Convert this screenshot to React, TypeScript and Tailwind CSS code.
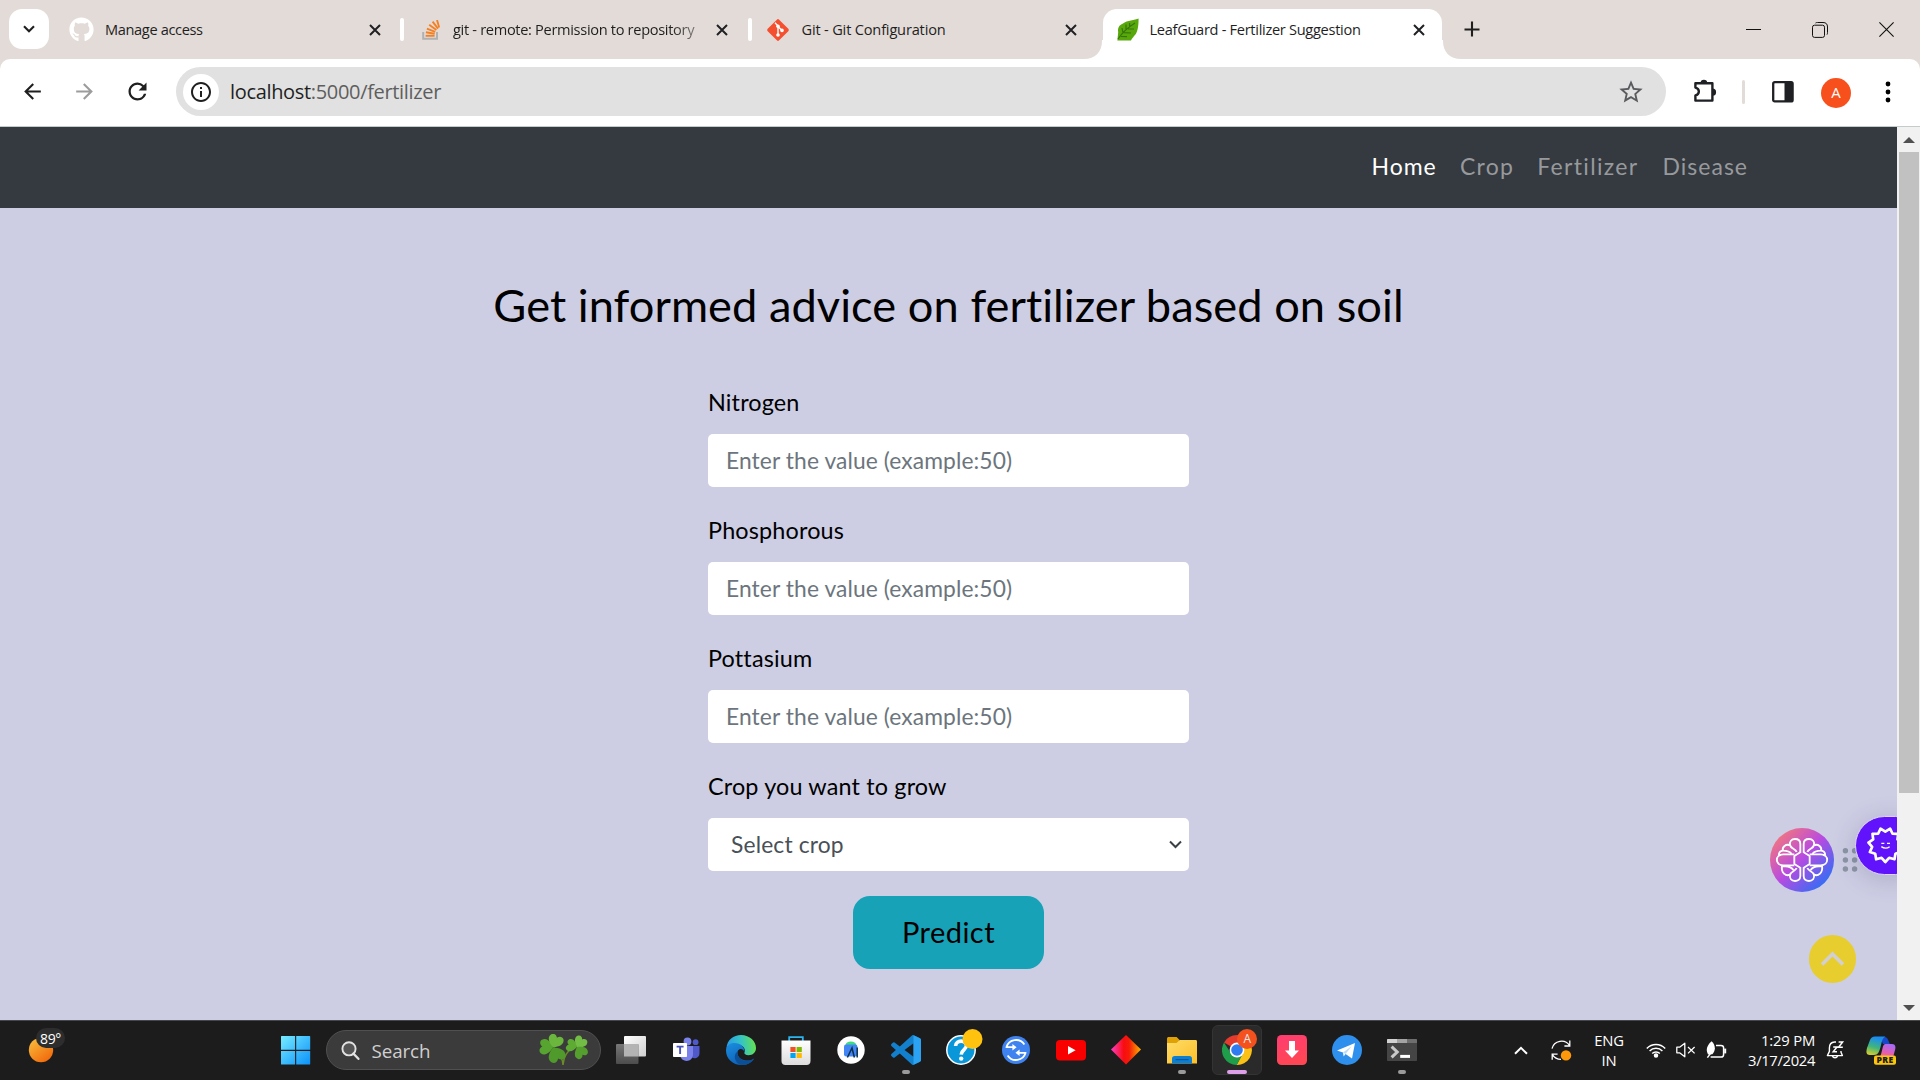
import React from "react";
import { FaGithub } from "react-icons/fa";
import { MdArrowBack, MdArrowForward, MdRefresh, MdInfoOutline, MdStarBorder } from "react-icons/md";

const ui = "font-['Open_Sans','Noto_Sans',sans-serif]";

function CloseX() {
  return (
    <svg width="12" height="12" viewBox="0 0 12 12" className="shrink-0">
      <path d="M1 1 L11 11 M11 1 L1 11" stroke="#202124" strokeWidth="2" />
    </svg>
  );
}

function StackIcon() {
  return (
    <svg width="18" height="20" viewBox="0 0 18 20" className="shrink-0">
      <path d="M1.2 12 V18.8 H15 V12" fill="none" stroke="#b0b1b3" strokeWidth="2" />
      <g stroke="#f48024" strokeWidth="1.9">
        <path d="M3.6 15.8 H12.6" />
        <path d="M3.9 12.2 L12.7 13.7" />
        <path d="M4.9 8.6 L13.2 11.9" />
        <path d="M7.2 4.8 L14.4 10" />
        <path d="M10.6 1.6 L16 8.6" />
        <path d="M15 0 L17.2 7.6" />
      </g>
    </svg>
  );
}

function GitIcon() {
  return (
    <svg width="24" height="24" viewBox="0 0 24 24" className="shrink-0">
      <rect x="3.9" y="3.9" width="16.2" height="16.2" rx="1.6" fill="#f4502f" transform="rotate(45 12 12)" />
      <path d="M9 4.8 L12 8 V17 M12 8.6 L15.8 12.2" stroke="#fff" strokeWidth="1.4" fill="none" />
      <circle cx="12" cy="8.2" r="1.8" fill="#fff" />
      <circle cx="12" cy="17" r="1.8" fill="#fff" />
      <circle cx="16" cy="12.4" r="1.8" fill="#fff" />
    </svg>
  );
}

function LeafIcon() {
  return (
    <svg width="22" height="23" viewBox="0 0 22 23" className="shrink-0">
      <path d="M21.6 0.5 C18 2 10 2.4 6 5.4 C2 7 0.6 10 1.2 14 L0.4 22.6 L14 22.6 C15 20 16 20 17 18 C20 16 21.6 10 21.6 0.5 Z" fill="#58a80c" />
      <path d="M1 21 C5 15 10 10 18 5 M9 12 V6.5 M12.6 9 V5 M6 15 L5 10 M7 14.6 L14 15 M11 11 L17 11 M4 18.4 L10 18.6" stroke="#35750a" strokeWidth="1.2" fill="none" />
    </svg>
  );
}

function TabStrip() {
  return (
    <div className={`flex h-[59px] items-start bg-[#e3dbd7] text-[14.6px] tracking-[-0.38px] text-[#1f1f1f] ${ui}`}>
      <div className="mt-[9px] ml-[9px] flex h-10 w-10 shrink-0 items-center justify-center rounded-[13px] bg-white">
        <svg width="12" height="8" viewBox="0 0 12 8"><path d="M1 1.2 L6 6.2 L11 1.2" fill="none" stroke="#1f1f1f" strokeWidth="2.1" /></svg>
      </div>
      <div className="flex h-[59px] w-[351px] shrink-0 items-center pl-5">
        <FaGithub size={25} color="#fff" className="shrink-0" />
        <span className="ml-[11px] flex-1 whitespace-nowrap tracking-[-0.36px]">Manage access</span>
        <CloseX />
        <span className="w-[19.5px]" />
      </div>
      <span className="mt-[18px] h-[23px] w-1 shrink-0 rounded-sm bg-white" />
      <div className="flex h-[59px] w-[344px] shrink-0 items-center pl-[18px]">
        <StackIcon />
        <span className="ml-[13px] w-[246px] overflow-hidden whitespace-nowrap bg-linear-to-r from-[#1f1f1f] from-88% to-[#8f8a88] bg-clip-text tracking-[-0.32px] text-transparent">git - remote: Permission to repository</span>
        <span className="w-[17px]" />
        <CloseX />
      </div>
      <span className="mt-[18px] h-[23px] w-1 shrink-0 rounded-sm bg-white" />
      <div className="flex h-[59px] w-[350px] shrink-0 items-center pl-[14px]">
        <GitIcon />
        <span className="ml-[11.5px] w-[263px] whitespace-nowrap tracking-[-0.18px]">Git - Git Configuration</span>
        <CloseX />
      </div>
      <div className="-ml-[18px] flex h-[59px] shrink-0 items-end">
        <svg width="19" height="19" viewBox="0 0 19 19"><path d="M0 19 C11 19 18 12 18 1 V0 H19 V19 Z" fill="#fff" /></svg>
        <div className="flex h-[50px] w-[339px] items-center rounded-t-[14px] bg-white pb-[9px] pl-[14px]">
          <LeafIcon />
          <span className="ml-[10.5px] w-[263.5px] whitespace-nowrap tracking-[-0.3px]">LeafGuard - Fertilizer Suggestion</span>
          <CloseX />
        </div>
        <svg width="19" height="19" viewBox="0 0 19 19"><path d="M19 19 C8 19 1 12 1 1 V0 H0 V19 Z" fill="#fff" /></svg>
      </div>
      <svg width="16" height="16" viewBox="0 0 16 16" className="mt-[21px] ml-[2.5px] shrink-0"><path d="M8 0.5 V15.5 M0.5 8.5 H15.5" stroke="#1f1f1f" strokeWidth="2.1" /></svg>
      <div className="ml-auto flex h-[59px] items-center gap-[51px] pr-[26px]">
        <svg width="15" height="15" viewBox="0 0 15 15"><path d="M0 7.5 H15" stroke="#111" /></svg>
        <svg width="16" height="16" viewBox="0 0 16 16"><rect x="0.5" y="3.2" width="12" height="12.2" rx="2" fill="none" stroke="#111" /><path d="M3.5 1 C4 0.5 5 0.5 5.5 0.5 H11 C14 0.5 15.5 2 15.5 5 V10.5 C15.5 11.5 15.4 12 15 12.6" fill="none" stroke="#111" /></svg>
        <svg width="15" height="15" viewBox="0 0 15 15"><path d="M0.4 0.4 L14.6 14.6 M14.6 0.4 L0.4 14.6" stroke="#111" strokeWidth="1.1" /></svg>
      </div>
    </div>
  );
}

function Toolbar() {
  return (
    <div className="bg-[#e3dbd7]">
      <div className={`flex h-[67px] items-center rounded-t-[10px] bg-white pb-[2px] ${ui}`}>
        <MdArrowBack size={25} color="#1f1f1f" className="ml-5 shrink-0" />
        <MdArrowForward size={25} color="#9c9c9c" className="ml-[27px] shrink-0" />
        <MdRefresh size={27} color="#1f1f1f" className="ml-[27px] shrink-0" />
        <div className="ml-[25px] flex h-[49px] w-[1490px] shrink-0 items-center rounded-full bg-[#e1e1e1] pl-[7px]">
          <div className="flex h-9 w-9 items-center justify-center rounded-full bg-white"><MdInfoOutline size={24} color="#1f1f1f" /></div>
          <span className="ml-[11px] flex-1 text-[20px] tracking-[-0.33px] text-[#5e5e5e]"><span className="text-[#1f1f1f]">localhost</span>:5000/fertilizer</span>
          <MdStarBorder size={28} color="#5a5b5e" className="mr-[21px]" />
        </div>
        <svg width="25" height="26" viewBox="0 0 25 26" className="ml-[27px] shrink-0">
          <path d="M2.4 4.2 H19.4 V21.6 H2.4 V16.4 C7 15.4 7 9.6 2.4 8.6 Z" fill="none" stroke="#1f2024" strokeWidth="2.4" strokeLinejoin="round" />
          <path d="M7.6 4 A3.3 3.3 0 0 1 14.2 4 Z M19.5 9.6 A3.6 3.6 0 0 1 19.5 16.8 Z" fill="#1f2024" />
        </svg>
        <span className="ml-6 h-6 w-[3px] rounded-full bg-[#e3dbd7]" />
        <svg width="22" height="22" viewBox="0 0 22 22" className="ml-[27px] shrink-0"><rect x="1.2" y="1.2" width="19.4" height="19.2" rx="1.5" fill="none" stroke="#1f2024" strokeWidth="2.3" /><path d="M12.5 1 H20.5 V21 H12.5 Z" fill="#1f2024" /></svg>
        <span className="mt-[2px] ml-[27px] flex h-[30px] w-[30px] items-center justify-center rounded-full bg-[#f8501c] text-[15px] text-white">A</span>
        <svg width="6" height="22" viewBox="0 0 6 22" className="ml-[34px] shrink-0"><circle cx="3" cy="3" r="2.4" /><circle cx="3" cy="11" r="2.4" /><circle cx="3" cy="19" r="2.4" /></svg>
      </div>
      <div className="h-px bg-[#c4cccb]" />
    </div>
  );
}

function Field({ label, children }: { label: string; children: React.ReactNode }) {
  return (
    <div className="flex flex-col gap-[17px]">
      <label className="h-[30px] text-[23.4px] leading-[30px] tracking-[0.16px] whitespace-nowrap text-black">{label}</label>
      <div className="flex h-[53px] items-center rounded-[5px] bg-white pb-px text-[22.8px] tracking-[0.1px]">{children}</div>
    </div>
  );
}

function Smiley() {
  const pts = Array.from({ length: 22 }, (_, i) => {
    const a = (Math.PI / 11) * i + Math.PI / 2;
    const r = i % 2 === 0 ? 51 : 40;
    return `${436 + r * Math.cos(a)},${195 + r * Math.sin(a)}`;
  }).join(" ");
  return (
    <svg width="41" height="60" viewBox="348 105 123 180" className="block">
      <polygon points={pts} fill="none" stroke="#fff" strokeWidth="8" strokeLinejoin="round" />
      <path d="M424 190 H433 M441 190 H450" stroke="#fff" strokeWidth="4" />
      <path d="M424 200 Q437 209 449 200" stroke="#fff" strokeWidth="4" fill="none" />
    </svg>
  );
}

function HalfFlower() {
  return (
    <g fill="none" stroke="#fff" strokeWidth="5.5" strokeLinejoin="round">
      <path d="M181 218 V192 C181 181 173 177 165 177 C154 177 148 185 150 195 C152 206 166 206 170 216" />
      <path d="M181 262 V288 C181 298 173 303 165 303 C154 303 148 295 150 285 C152 274 166 274 170 264" />
      <path d="M182 216 L163 228 V252 L182 264" />
      <path d="M150 196 C138 190 125 202 129 212 C134 212 148 212 155 222" />
      <path d="M150 284 C138 290 122 278 126 258" />
      <path d="M163 223 H130 C104 223 104 256 130 256 H163" />
      <path d="M128 212 C114 214 114 232 122 224 M126 258 C140 260 152 256 160 270" />
    </g>
  );
}

function Page() {
  return (
    <div className="relative flex h-[893px] font-['Lato',sans-serif]">
      <main className="flex w-[1897px] flex-col overflow-hidden bg-[#cdcee4]">
        <nav className="flex h-[81px] shrink-0 items-center justify-end bg-[#343a40] pr-[149px] pb-[2px] text-[23px] tracking-[1.25px] text-[#98999c]">
          <span className="mr-[23.5px] tracking-[0.9px] text-white">Home</span>
          <span className="mr-[23px]">Crop</span>
          <span className="mr-[24px] tracking-[1.35px]">Fertilizer</span>
          <span className="tracking-[1px]">Disease</span>
        </nav>
        <h2 className="mt-[70px] h-[54px] text-center text-[45.2px] leading-[54px] tracking-[0.05px] text-black">Get informed advice on fertilizer based on soil</h2>
        <form className="mx-auto mt-[55px] flex w-[481px] flex-col gap-7">
          <Field label="Nitrogen"><span className="pl-[18px] text-[#6c757d]">Enter the value (example:50)</span></Field>
          <Field label="Phosphorous"><span className="pl-[18px] text-[#6c757d]">Enter the value (example:50)</span></Field>
          <Field label="Pottasium"><span className="pl-[18px] text-[#6c757d]">Enter the value (example:50)</span></Field>
          <Field label="Crop you want to grow">
            <span className="flex-1 pl-[23px] tracking-[0.15px] text-[#495057]">Select crop</span>
            <svg width="13" height="9" viewBox="0 0 13 9" className="mr-[7px]"><path d="M1 1.5 L6.5 7 L12 1.5" fill="none" stroke="#3b4046" strokeWidth="2" /></svg>
          </Field>
        </form>
        <button className="mx-auto mt-[25px] h-[73px] w-[191px] shrink-0 rounded-[17px] bg-[#17a2b8] pb-px text-[29px] tracking-[0.45px] text-black">Predict</button>
      </main>
      <aside className="flex w-[23px] flex-col items-center bg-[#f1f1f1]">
        <svg width="12" height="6" viewBox="0 0 12 6" className="mt-[10px]"><path d="M0 6 L6 0 L12 6 Z" fill="#505050" /></svg>
        <div className="mt-[9px] h-[641px] w-5 bg-[#c1c1c1]" />
        <svg width="12" height="6" viewBox="0 0 12 6" className="mt-auto mb-[9px]"><path d="M0 0 L6 6 L12 0 Z" fill="#505050" /></svg>
      </aside>
      <div className="absolute top-[653px] right-[23px] h-[240px] w-[157px] overflow-hidden">
        <svg width="64" height="64" viewBox="90 144 192 192" className="absolute top-[48px] left-[30px]">
          <defs>
            <linearGradient id="orb" x1="0.1" y1="0.1" x2="0.9" y2="0.9"><stop offset="0" stopColor="#f4777c" /><stop offset="0.48" stopColor="#b84be0" /><stop offset="1" stopColor="#2a70f7" /></linearGradient>
          </defs>
          <circle cx="186" cy="240" r="96" fill="url(#orb)" />
          <HalfFlower />
          <g transform="translate(372 0) scale(-1 1)"><HalfFlower /></g>
        </svg>
        <svg width="16" height="26" viewBox="0 0 16 26" className="absolute top-[67px] left-[102px]" fill="#8b95a4">
          {[3.7, 13, 22].map((y) => <g key={y}><circle cx="3.4" cy={y} r="2.7" /><circle cx="12.6" cy={y} r="2.7" /></g>)}
        </svg>
        <div className="absolute top-[36px] left-[115px] h-[59px] w-[70px] rounded-full border border-[#ddd6f6] bg-[#6113fb] shadow-[0_4px_24px_rgba(60,60,100,0.22)]"><div className="-mt-[2px]"><Smiley /></div></div>
        <div className="absolute top-[155px] left-[69px] flex h-12 w-[47px] items-center justify-center rounded-full bg-[#e8cd2f]">
          <svg width="25" height="16" viewBox="0 0 25 16"><path d="M2 13.5 L12.5 3 L23 13.5" fill="none" stroke="#d2cfd2" strokeWidth="3.6" /></svg>
        </div>
      </div>
    </div>
  );
}

/* Each taskbar glyph is drawn on a 30×30 grid centred in its slot. */
function Slot({ children, mark }: { children: React.ReactNode; mark?: boolean }) {
  return (
    <div className="relative flex h-[60px] w-[55.1px] shrink-0 items-center justify-center">
      <svg width="30" height="30" viewBox="0 0 30 30" overflow="visible">{children}</svg>
      {mark && <span className="absolute bottom-[6px] left-1/2 h-1 w-2 -translate-x-1/2 rounded-full bg-[#9a9a9a]" />}
    </div>
  );
}

function TaskIcons() {
  return (
    <div className="ml-[2.1px] flex">
      <Slot>
        <defs><linearGradient id="tv1" x1="0" y1="0" x2="1" y2="1"><stop offset="0" stopColor="#fff" /><stop offset="1" stopColor="#cfcfcf" /></linearGradient><linearGradient id="tv2" x1="0" y1="0" x2="0" y2="1"><stop offset="0" stopColor="#777" /><stop offset="1" stopColor="#4c4c4c" /></linearGradient></defs>
        <rect x="8" y="1" width="22" height="20.5" rx="1" fill="url(#tv1)" /><rect x="0" y="9" width="22.5" height="20" rx="1" fill="url(#tv2)" /><rect x="8" y="9" width="14.5" height="12.5" fill="#b4b4b4" />
      </Slot>
      <Slot>
        <circle cx="24.6" cy="7.2" r="2.9" fill="#5059c9" /><path d="M20 11 H28.5 V18 C28.5 24 22 24 20 22 Z" fill="#5059c9" /><circle cx="16.5" cy="6.5" r="3.9" fill="#7b83eb" /><path d="M9 11 H22 V19 C22 28 10 28 9 20 Z" fill="#7b83eb" /><rect x="2" y="8" width="14" height="14" rx="0.8" fill="#fff" /><path d="M5.6 11.6 H12.6 M9.1 11.6 V19" stroke="#4a53bc" strokeWidth="1.9" />
      </Slot>
      <Slot>
        <defs><linearGradient id="ed1" x1="0" y1="0.5" x2="1" y2="0.4"><stop offset="0" stopColor="#2b9ae8" /><stop offset="0.5" stopColor="#34c3c6" /><stop offset="1" stopColor="#66e24c" /></linearGradient><linearGradient id="ed2" x1="0" y1="0" x2="0.6" y2="1"><stop offset="0" stopColor="#1b8fe0" /><stop offset="1" stopColor="#0d5db5" /></linearGradient></defs>
        <path d="M0.5 13 C1 5 7.5 0 15 0 C24 0 30 6.6 30 13 C30 17.6 26.6 20.2 22.6 20.2 C19.4 20.2 18 19 18.4 17.6 C19.8 15.8 18.6 10.4 12.4 10 C6 9.6 2 11 0.5 13 Z" fill="url(#ed1)" />
        <path d="M0 15.4 C0 10.6 4 8 8.6 8 C14.6 8 18.8 12 18.4 17.2 C17.6 13.4 13.4 13 12 15.6 C10 19.4 13.4 25.2 20 25.6 C24 25.8 26.6 24.4 28.2 23.4 C25.4 27.8 20.8 30 15.4 30 C6.8 30 0 23.4 0 15.4 Z" fill="url(#ed2)" />
        <path d="M11.6 16.4 C10.6 20.4 14 25.4 20 25.6 C24 25.8 26.6 24.4 28.2 23.4 C25.4 27.8 20.8 30 15.4 30 C8 28 7 19 11.6 16.4 Z" fill="#0b4f97" />
      </Slot>
      <Slot>
        <defs><linearGradient id="st" x1="0" y1="0" x2="0" y2="1"><stop offset="0" stopColor="#fff" /><stop offset="1" stopColor="#dcdcdc" /></linearGradient></defs>
        <path d="M8.2 6.5 V2.2 H21.8 V6.5" fill="none" stroke="#2db4ee" strokeWidth="1.8" /><path d="M0.5 5.5 H29.5 V26 C29.5 28.4 28 30 25.6 30 H4.4 C2 30 0.5 28.4 0.5 26 Z" fill="url(#st)" />
        <rect x="9.4" y="12" width="5.2" height="5" fill="#f25022" /><rect x="15.6" y="12" width="5.2" height="5" fill="#7fba00" /><rect x="9.4" y="18" width="5.2" height="5" fill="#00a4ef" /><rect x="15.6" y="18" width="5.2" height="5" fill="#ffb900" />
      </Slot>
      <Slot>
        <circle cx="15" cy="15" r="13.7" fill="#fff" /><path d="M9.4 10 A5.6 4.4 0 0 1 20.4 10 Z" fill="#3ddc84" /><rect x="8" y="9.4" width="13.4" height="12" rx="2.2" fill="#4285f4" /><path d="M11.4 22.5 L16 13 L18.4 22.5 M21.2 12.4 V22.5" stroke="#0c2f4b" strokeWidth="1.5" fill="none" />
      </Slot>
      <Slot mark>
        <g transform="scale(1.25)"><path d="M23.15 2.587L18.21.21a1.494 1.494 0 0 0-1.705.29l-9.46 8.63-4.12-3.128a.999.999 0 0 0-1.276.057L.327 7.261A1 1 0 0 0 .326 8.74L3.899 12 .326 15.26a1 1 0 0 0 .001 1.479L1.65 17.94a.999.999 0 0 0 1.276.057l4.12-3.128 9.46 8.63a1.492 1.492 0 0 0 1.704.29l4.942-2.377A1.5 1.5 0 0 0 24 20.06V3.939a1.5 1.5 0 0 0-.85-1.352zm-5.146 14.861L10.826 12l7.178-5.448v10.896z" fill="#1280cc" /><path d="M18 .2 L23.15 2.587 A1.5 1.5 0 0 1 24 3.94 V20.06 A1.5 1.5 0 0 1 23.15 21.4 L18 23.8 Z" fill="#2ba3f2" /></g>
      </Slot>
      <Slot>
        <circle cx="15" cy="15" r="14.2" fill="#0a97d9" stroke="#fff" strokeWidth="1.5" /><path d="M9.6 11 C9.6 4.6 20.6 4.4 20.4 10.8 C20.3 14.6 15.4 14.6 15.2 19.6" fill="none" stroke="#fff" strokeWidth="3.6" /><circle cx="15.2" cy="23.6" r="2.2" fill="#fff" /><circle cx="26.5" cy="4" r="10" fill="#ffc20e" />
      </Slot>
      <Slot>
        <circle cx="15" cy="15" r="14" fill="#3f83f0" />
        <g fill="none" stroke="#fff" strokeWidth="1.8" strokeLinejoin="round">
          <path d="M23.4 9.6 A10 10 0 0 0 5.4 12.2 H12.4" /><path d="M6.6 20.4 A10 10 0 0 0 24.6 17.8 H17.6" />
        </g>
        <path d="M11.4 9 L15.6 12.2 L11.4 15.4 Z M18.6 14.6 L14.4 17.8 L18.6 21 Z" fill="#fff" />
      </Slot>
      <Slot><rect x="0" y="5" width="30" height="20.4" rx="4" fill="#f90000" /><path d="M12 11 L19.6 15.2 L12 19.4 Z" fill="#fff" /></Slot>
      <Slot>
        <defs><linearGradient id="dm"><stop offset="0" stopColor="#ff3ec8" /><stop offset="0.42" stopColor="#f80d12" /><stop offset="0.6" stopColor="#f61a08" /><stop offset="1" stopColor="#ffb400" /></linearGradient></defs>
        <path d="M15 0 L30 14.6 L15 29.4 L0 14.6 Z" fill="url(#dm)" />
      </Slot>
      <Slot mark>
        <defs><linearGradient id="fo" x1="0" y1="0" x2="1" y2="1"><stop offset="0" stopColor="#ffdc68" /><stop offset="1" stopColor="#fcbf28" /></linearGradient></defs>
        <path d="M0 3.6 C0 2.6 0.8 2 1.6 2 H9.6 L12.6 5 V11 H0 Z" fill="#dfa106" /><path d="M0 8 H9.5 L12.8 5 H28.6 C29.4 5 30 5.6 30 6.4 V28.6 H0 Z" fill="url(#fo)" /><path d="M5 28.6 V23.6 C5 22 6 21 7.6 21 H22.4 C24 21 25 22 25 23.6 V28.6 Z" fill="#0d7fd2" /><path d="M8.6 24.6 H21.6" stroke="#0a5597" strokeWidth="1.2" />
      </Slot>
      <div className="relative flex h-[60px] w-[55.1px] shrink-0 items-center justify-center">
        <div className="flex h-[50px] w-[50px] items-center justify-center rounded-md border border-[#343434] bg-[#2a2a2a]">
          <svg width="30" height="30" viewBox="0 0 30 30">
            <path d="M2 7.6 A15 15 0 0 1 28 7.6 L15 15 Z" fill="#e33b2e" /><path d="M15 8 H28.2 A15 15 0 0 1 14.6 30 L21 18 Z" fill="#fbc116" /><path d="M2 7.4 L9 18.4 L21 18.4 L14.8 30 A15 15 0 0 1 2 7.4 Z" fill="#1f9d4b" />
            <circle cx="15" cy="15" r="7.4" fill="#fff" /><circle cx="15" cy="15" r="5.8" fill="#2f7cf0" />
          </svg>
        </div>
        <span className={`absolute top-[9px] right-[7px] flex h-5 w-5 items-center justify-center rounded-full bg-[#f4511e] text-[12px] text-[#e9e9e9] ${ui}`}>A</span>
        <span className="absolute bottom-[6px] left-1/2 h-1 w-5 -translate-x-1/2 rounded-full bg-[#dd9fe8]" />
      </div>
      <Slot><defs><linearGradient id="dl" x1="0" y1="0" x2="0.3" y2="1"><stop offset="0" stopColor="#ff3d72" /><stop offset="1" stopColor="#ff4654" /></linearGradient></defs><rect width="30" height="30" rx="4.5" fill="url(#dl)" /><path d="M12 6 H18 V15.6 H22 L15 23 L8 15.6 H12 Z" fill="#fff" /></Slot>
      <Slot><circle cx="15" cy="15" r="15" fill="#2f8fec" /><path d="M5 15.4 L23 8 L20 23.4 L13.6 19 L11.6 21.4 L11 17.6 Z" fill="#fff" /><path d="M11 17.6 L19.6 11.2 L13.6 19" fill="#bcdcf8" /></Slot>
      <Slot mark>
        <path d="M0 8 H30 V25 C30 25.6 29.6 26 29 26 H1 C0.4 26 0 25.6 0 25 Z" fill="#454545" /><path d="M0 8 V5 C0 4.4 0.4 4 1 4 H10 V8 Z" fill="#d2d2d2" /><path d="M10 4 H20 V8 H10 Z" fill="#a3a3a3" /><path d="M20 4 H29 C29.6 4 30 4.4 30 5 V8 H20 Z" fill="#6e6e6e" /><path d="M4.6 11.6 L10.2 17 L4.6 22.4" fill="none" stroke="#c9c9c9" strokeWidth="3" /><path d="M13.2 21.4 H23" stroke="#fff" strokeWidth="3" />
      </Slot>
    </div>
  );
}

function Clover() {
  const leaf = "M0 0 C-4 -2 -9 -6 -6 -10.5 C-4.4 -12.6 -1.4 -12 0 -9.6 C1.4 -12 4.4 -12.6 6 -10.5 C9 -6 4 -2 0 0 Z";
  return (
    <svg width="50" height="32" viewBox="0 0 50 32" className="mr-[11px]">
      <path d="M15 14 C20 19 24 24 24 31 M35 12 C28 18 24.6 22 24 31" stroke="#6c8a2a" strokeWidth="1.5" fill="none" />
      <g transform="translate(14 13.5)">
        <path d={leaf} fill="#57a530" transform="rotate(-85) scale(1.12)" /><path d={leaf} fill="#6bb73d" transform="rotate(22) scale(1.1)" /><path d={leaf} fill="#4f9a2b" transform="rotate(155) scale(1.25)" />
      </g>
      <g transform="translate(38 13)">
        <path d={leaf} fill="#5dab33" transform="rotate(-75) scale(0.9)" /><path d={leaf} fill="#72bd45" transform="rotate(35) scale(0.95)" /><path d={leaf} fill="#559f2e" transform="rotate(145)" />
      </g>
    </svg>
  );
}

function Tray() {
  return (
    <div className="ml-auto flex h-[60px] w-[406px] shrink-0 items-center text-[14.8px] leading-[20px] text-white">
      <svg width="14" height="9" viewBox="0 0 14 9" className="shrink-0"><path d="M1 7.8 L7 1.8 L13 7.8" fill="none" stroke="#fff" strokeWidth="2" /></svg>
      <svg width="21" height="21" viewBox="0 0 21 21" className="ml-[23px] shrink-0" fill="none" stroke="#fff" strokeWidth="1.3">
        <path d="M1 8.6 C3 0.4 14 -1.4 18.6 5.6 M18.8 0.6 V6 H13.4 M10 19.4 C6 19.4 3.2 17.6 1.4 14.6 M1.2 19.8 V14.2 H6.6" /><circle cx="15" cy="15.4" r="5.2" fill="#ff980a" stroke="none" />
      </svg>
      <div className="ml-[20px] w-[34px] text-center tracking-[-0.2px]"><div>ENG</div><div>IN</div></div>
      <svg width="20" height="16" viewBox="0 0 20 16" className="ml-[20px] shrink-0" fill="none" stroke="#fff" strokeWidth="1.5"><path d="M0.8 6.4 A12.6 12.6 0 0 1 19.2 6.4 M3.6 9 A9 9 0 0 1 16.4 9 M6.2 11.6 A5.2 5.2 0 0 1 13.8 11.6" /><circle cx="10" cy="13.4" r="1.5" fill="#fff" /></svg>
      <svg width="20" height="16" viewBox="0 0 20 16" className="ml-[10px] shrink-0" fill="none" stroke="#fff" strokeWidth="1.3"><path d="M0.8 5.2 H3.6 L8.8 1.2 V14.8 L3.6 10.8 H0.8 Z" strokeLinejoin="round" /><path d="M12 5 L18.6 11.4 M18.6 5 L12 11.4" /></svg>
      <svg width="21" height="18" viewBox="0 0 21 18" className="ml-[10px] shrink-0" fill="none" stroke="#fff" strokeWidth="1.5"><path d="M10 4.4 H15 C16.6 4.4 17.6 5.2 17.6 6.8 V13.4 C17.6 15.2 16.6 16 15 16 H4.6" /><path d="M19.2 7.6 V12.4" strokeWidth="2" /><path d="M5.6 0.2 C9.6 4 10 9.4 6.4 13.2 L2 13.4 C-1 8 1.8 3.4 5.6 0.2 Z" fill="#fff" stroke="none" /><path d="M1.4 16.6 L4.4 12.6" /></svg>
      <div className="ml-[12px] w-[76px] text-right tracking-[-0.35px]"><div className="tracking-[-0.2px]">1:29 PM</div><div>3/17/2024</div></div>
      <svg width="19" height="19" viewBox="0 0 19 19" className="ml-[11px] shrink-0" fill="none" stroke="#fff" strokeWidth="1.4"><path d="M10 1 H8.6 C5 1.2 3.4 4 3.4 7 V10.4 L1.4 14.6 H16.4 L15 11.2 V10 M6.4 15 A2.8 2.8 0 0 0 11.6 15" strokeLinejoin="round" /><path d="M7.2 6 H11 L7.2 10.8 H11 M12.6 1 H16.6 L12.6 6.2 H16.8" strokeWidth="1.5" /></svg>
      <svg width="30" height="30" viewBox="0 0 30 30" className="ml-[21px] shrink-0">
        <defs><linearGradient id="cp1" x1="0.3" y1="0" x2="0" y2="1"><stop offset="0" stopColor="#1c8df0" /><stop offset="0.5" stopColor="#3fb57c" /><stop offset="1" stopColor="#f0d321" /></linearGradient><linearGradient id="cp2" x1="0.6" y1="0" x2="0.2" y2="1"><stop offset="0" stopColor="#a86af4" /><stop offset="0.6" stopColor="#ec5da9" /><stop offset="1" stopColor="#f7903a" /></linearGradient></defs>
        <path d="M14 2 H19 C21.6 2 22.6 6 23.8 9 L17 9 Z" fill="#1748c8" />
        <path d="M9 1.6 H19.4 C16.6 3 16 6 15 10 C13.4 17 12 20 8 20 H4 C0 20 0 17 1 13 L3.8 5.6 C4.8 3 6.4 1.6 9 1.6 Z" fill="url(#cp1)" />
        <path d="M19.6 9 H26 C29.4 9 30 12 29 15 L26.6 24 H11 C14.4 24 15.4 18 16.6 13 C17.2 10.6 18 9 19.6 9 Z" fill="url(#cp2)" />
        <rect x="8" y="20.4" width="22" height="9.4" rx="2" fill="#fbc60d" />
        <text x="19" y="28.2" textAnchor="middle" fontFamily="Open Sans" fontWeight="800" fontSize="8.6" fill="#1c1c1c" letterSpacing="0.4">PRE</text>
      </svg>
    </div>
  );
}

function Taskbar() {
  return (
    <div className={`relative flex h-[60px] items-center bg-[#1c1c1c] shadow-[inset_0_1px_0_#45474a] ${ui}`}>
      <div className="relative ml-[28px] h-[60px] w-[40px] shrink-0">
        <svg width="26" height="26" viewBox="0 0 26 26" className="absolute top-[17px] left-0"><defs><linearGradient id="sun" x1="0.1" y1="0.1" x2="0.8" y2="1"><stop offset="0" stopColor="#f6b83a" /><stop offset="1" stopColor="#f2660a" /></linearGradient></defs><circle cx="13" cy="13" r="12.2" fill="url(#sun)" /></svg>
        <span className="absolute top-[8px] left-[8px] flex h-[20px] w-[29px] items-center justify-center rounded-full bg-[#2d2d2d] text-[14px] tracking-[-0.4px] text-white">89°</span>
      </div>
      <svg width="30" height="30" viewBox="0 0 30 30" className="ml-[213px] shrink-0">
        <defs><linearGradient id="win" x1="0" y1="0" x2="1" y2="1"><stop offset="0" stopColor="#77edff" /><stop offset="0.5" stopColor="#3fbdfd" /><stop offset="1" stopColor="#0c92f8" /></linearGradient></defs>
        <path d="M0 1.6 Q0 1 0.6 1 H14.1 V14.8 H0 Z M15.2 1 H28.6 Q29.2 1 29.2 1.6 V14.8 H15.2 Z M0 15.9 H14.1 V29.6 H0.6 Q0 29.6 0 29 Z M15.2 15.9 H29.2 V29 Q29.2 29.6 28.6 29.6 H15.2 Z" fill="url(#win)" />
      </svg>
      <div className="ml-[15px] flex h-10 w-[275px] shrink-0 items-center rounded-full border border-[#505050] bg-[#3b3b3b]">
        <svg width="19" height="19" viewBox="0 0 19 19" className="ml-[14px]"><circle cx="8" cy="7.8" r="6.6" fill="#555" stroke="#e2e2e2" strokeWidth="1.9" /><path d="M12.4 12.6 L17.4 17.8" stroke="#e2e2e2" strokeWidth="2.3" strokeLinecap="round" /></svg>
        <span className="ml-[11.5px] flex-1 pt-[2px] text-[18.8px] tracking-[-0.1px] text-[#d0d0d0]">Search</span>
        <Clover />
      </div>
      <TaskIcons />
      <Tray />
    </div>
  );
}

export default function App() {
  return (
    <div className="flex h-[1080px] w-[1920px] flex-col overflow-hidden">
      <TabStrip />
      <Toolbar />
      <Page />
      <Taskbar />
    </div>
  );
}
